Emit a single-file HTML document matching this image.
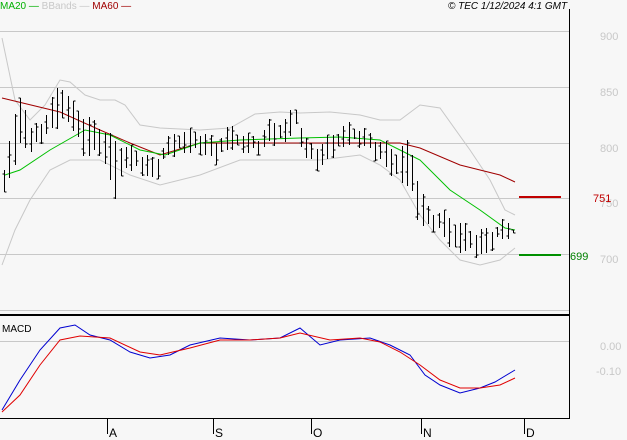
<!DOCTYPE html><html><head><style>
body{margin:0;background:#f7f7f7;width:627px;height:440px;overflow:hidden;font-family:"Liberation Sans",sans-serif}
svg{position:absolute;left:0;top:0}
</style></head><body>
<svg width="627" height="440" id="s" xmlns="http://www.w3.org/2000/svg" font-family="Liberation Sans, sans-serif">
<rect width="627" height="440" fill="#f7f7f7"/>
<g stroke="#c8c8c8" stroke-width="1">
<line x1="0" y1="31.5" x2="569" y2="31.5"/><line x1="0" y1="87.5" x2="569" y2="87.5"/><line x1="0" y1="143.5" x2="569" y2="143.5"/><line x1="0" y1="198.5" x2="569" y2="198.5"/><line x1="0" y1="254.5" x2="569" y2="254.5"/><line x1="0" y1="310.5" x2="569" y2="310.5"/><line x1="0" y1="341.5" x2="569" y2="341.5"/>
</g>
<line x1="569.5" y1="9" x2="569.5" y2="419" stroke="#000"/>
<line x1="0" y1="315" x2="569" y2="315" stroke="#000" stroke-width="2"/>
<line x1="0" y1="418.5" x2="570" y2="418.5" stroke="#000"/>
<g stroke="#000"><line x1="107.5" y1="418" x2="107.5" y2="434"/><line x1="213.5" y1="418" x2="213.5" y2="434"/><line x1="311.5" y1="418" x2="311.5" y2="434"/><line x1="421.5" y1="418" x2="421.5" y2="434"/><line x1="524.5" y1="418" x2="524.5" y2="434"/></g>
<g font-size="12" fill="#000"><text x="109" y="437">A</text><text x="215" y="437">S</text><text x="313" y="437">O</text><text x="423" y="437">N</text><text x="526" y="437">D</text></g>
<g font-size="11" fill="#c8c8c8"><text x="600" y="40">900</text><text x="600" y="96">850</text><text x="600" y="152">800</text><text x="600" y="207">750</text><text x="600" y="263">700</text><text x="600" y="350">0.00</text><text x="596" y="375">-0.10</text></g>
<text x="593" y="202" font-size="11" fill="#c00000">751</text>
<text x="570" y="260" font-size="11" fill="#008000">699</text>
<line x1="519" y1="197" x2="561" y2="197" stroke="#c00000" stroke-width="2"/>
<line x1="519" y1="255" x2="561" y2="255" stroke="#009000" stroke-width="2"/>
<text x="0" y="9" font-size="10"><tspan fill="#00b000">MA20 —</tspan><tspan fill="#c8c8c8"> BBands —</tspan><tspan fill="#a00000"> MA60 —</tspan></text>
<text x="448" y="9" font-size="10" font-style="italic" fill="#000">© TEC 1/12/2024 4:1 GMT</text>
<text x="2" y="332" font-size="10" fill="#000">MACD</text>
<g fill="none" stroke-width="1">
<polyline stroke="#c8c8c8" points="2,38 15,100 30,120 45,105 60,80 70,82 85,95 100,100 115,100 125,105 140,125 160,128 200,130 230,128 255,114 280,112 300,113 330,112 360,115 380,120 400,120 420,105 440,108 470,150 490,180 505,210 515,215"/>
<polyline stroke="#c8c8c8" points="2,265 15,230 30,200 50,170 70,160 100,160 130,175 160,185 200,175 240,160 280,160 320,160 360,155 380,165 400,180 420,215 440,240 460,260 480,265 500,260 515,248"/>
<polyline stroke="#a00000" points="2,98 60,112 100,130 130,143 160,155 200,143 260,143 340,143 400,143 420,148 460,165 500,175 515,182"/>
<polyline stroke="#00c000" points="5,175 20,170 50,150 85,130 110,135 140,150 165,155 200,143 240,140 300,138 340,137 380,140 400,150 420,160 450,190 480,210 505,228 515,230"/>
<polyline stroke="#0000d0" points="2,410 20,380 40,350 60,328 75,325 90,335 110,340 130,352 150,358 170,355 190,345 220,338 250,340 280,338 300,328 320,345 340,340 370,338 390,345 410,355 425,375 440,385 460,393 480,388 495,382 515,370"/>
<polyline stroke="#e00000" points="2,412 20,395 40,365 60,340 80,336 110,338 140,352 160,355 190,348 220,340 250,340 280,338 300,333 330,340 360,338 380,342 400,352 420,365 440,380 460,388 480,388 500,385 515,378"/>
</g>
<g id="bars" stroke="#000" stroke-width="1"></g>
</svg>
<script>
var k=[[5,160,190],[18,100,150],[22,88,140],[30,130,150],[45,115,135],[60,80,120],[70,100,120],[85,115,155],[100,125,150],[115,140,195],[125,145,165],[140,150,170],[155,160,180],[165,140,155],[180,130,150],[200,130,150],[215,140,160],[230,125,145],[245,135,150],[260,135,150],[270,120,140],[285,120,140],[295,103,125],[305,140,155],[320,145,168],[335,130,150],[350,123,140],[365,130,145],[380,140,160],[395,150,175],[410,140,185],[420,190,225],[430,210,225],[440,210,230],[455,220,250],[465,225,248],[475,230,252],[485,230,255],[495,225,240],[505,220,235],[513,225,235]];
function it(x,j){for(var i=0;i<k.length-1;i++){if(x<=k[i+1][0]){var t=(x-k[i][0])/(k[i+1][0]-k[i][0]);return k[i][j]+t*(k[i+1][j]-k[i][j]);}}return k[k.length-1][j];}
var g=document.getElementById('bars'),h='',n=0;
for(var x=4;x<=514;x+=5.3){n++;var hi=it(x,1),lo=it(x,2),r=Math.sin(n*1.7)*0.5+0.5,r2=Math.cos(n*2.3)*0.5+0.5;
hi+= (r-0.3)*8; lo+= (r2-0.3)*8;var xx=Math.round(x)+0.5;var o=hi+(lo-hi)*r2,c=hi+(lo-hi)*r;
h+='<line x1="'+xx+'" y1="'+hi.toFixed(0)+'" x2="'+xx+'" y2="'+lo.toFixed(0)+'"/><line x1="'+(xx-2)+'" y1="'+o.toFixed(0)+'" x2="'+xx+'" y2="'+o.toFixed(0)+'"/><line x1="'+xx+'" y1="'+c.toFixed(0)+'" x2="'+(xx+2)+'" y2="'+c.toFixed(0)+'"/>';}
g.innerHTML=h;
</script>
</body></html>
